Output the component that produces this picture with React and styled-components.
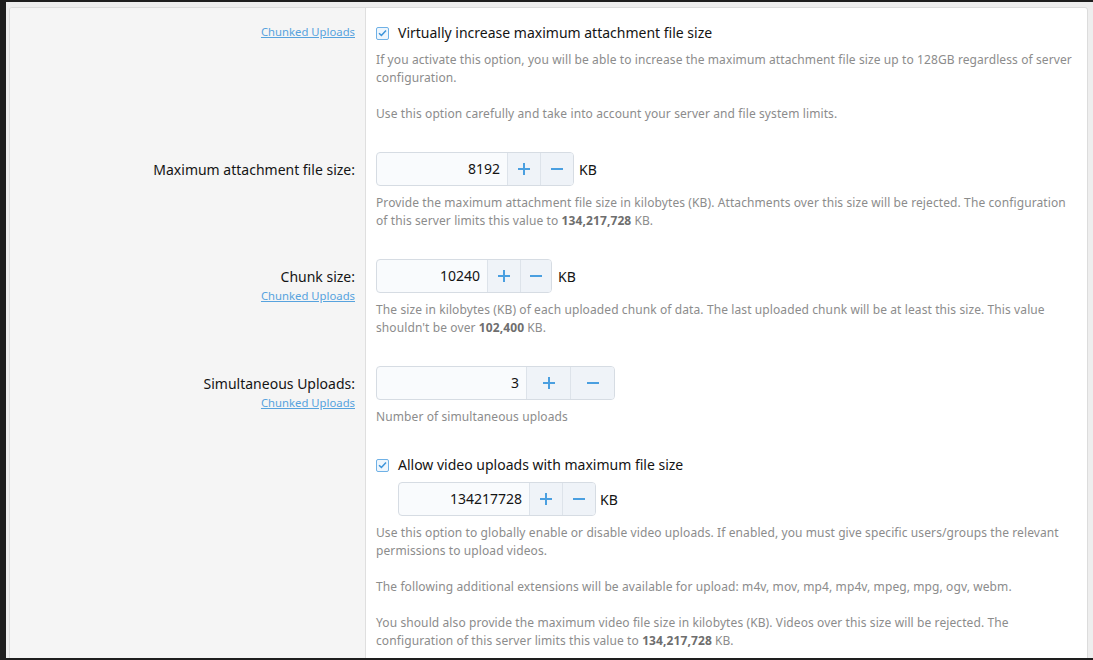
import React from "react";
import styled, { createGlobalStyle } from "styled-components";

const GlobalStyle = createGlobalStyle`
  html, body {
    margin: 0;
    background: #1e1e1e;
    font-family: "Noto Sans", "Open Sans", sans-serif;
  }
`;

const Page = styled.div`
  height: 658px;
  overflow: hidden;
  padding: 2px 0 0 6px;
  box-sizing: border-box;
`;

const Frame = styled.div`
  background: #eeeeee;
  padding: 5px 5px 0 3px;
  min-height: 100%;
  box-sizing: border-box;
`;

const Panel = styled.div`
  background: #fff;
  border: 1px solid #dcdcdc;
  border-radius: 3px 3px 0 0;
  overflow: hidden;
`;

const Row = styled.div`
  display: grid;
  grid-template-columns: 356px 1fr;
`;

const LabelCell = styled.div`
  background: #f5f5f5;
  border-right: 1px solid #dfdfdf;
  padding: ${p => p.$top}px 10px 15px;
  text-align: right;
`;

const Label = styled.div`
  font-size: 14px;
  line-height: 20px;
  color: #141414;
  padding-top: 1px;
`;

const Hint = styled.a`
  display: block;
  font-size: 11.3px;
  line-height: 18px;
  color: #57a3de;
  text-decoration: underline;
  cursor: pointer;
`;

const InputCell = styled.div`
  padding: 15px 10px;
`;

const CheckRow = styled.label`
  display: flex;
  align-items: center;
  gap: 9px;
  font-size: 14px;
  line-height: 20px;
  color: #141414;
`;

const Box = styled.span`
  width: 11px;
  height: 11px;
  border: 1px solid #6fb1e6;
  border-radius: 2px;
  background: #eef6fd;
  display: flex;
  align-items: center;
  justify-content: center;
`;

const Nested = styled.div`
  margin: 7px 0 0 22px;
`;

const UnitRow = styled.div`
  display: flex;
  align-items: center;
  gap: ${p => p.$gap || 5}px;
`;

const NumberBox = styled.div`
  display: flex;
  height: 34px;
  box-sizing: border-box;
  border: 1px solid #d6dce3;
  border-radius: 4px;
  background: #f9fbfd;
  overflow: hidden;
`;

const Field = styled.div`
  width: ${p => p.$w}px;
  box-sizing: border-box;
  padding-right: 7px;
  font-size: 14px;
  line-height: 32px;
  color: #141414;
  text-align: right;
`;

const StepButton = styled.div`
  width: ${p => p.$w}px;
  box-sizing: border-box;
  border-left: 1px solid #dde3ea;
  background: #eff3f8;
  display: flex;
  align-items: center;
  justify-content: center;
`;

const Unit = styled.span`
  font-size: 14px;
  color: #141414;
`;

const Explain = styled.div`
  margin-top: 7px;
  padding-top: 1px;
  margin-bottom: -1px;
  font-size: 12px;
  line-height: 18px;
  letter-spacing: 0.1px;
  color: #8c8c8c;

  p {
    margin: 0;
  }
  p + p {
    margin-top: 18px;
  }
  b {
    color: #6e6e6e;
  }
`;

const Check = () => (
  <Box>
    <svg width="9" height="8" viewBox="0 0 9 8">
      <path d="M1 4.2 L3.4 6.4 L8 1.4" fill="none" stroke="#3d94da" strokeWidth="1.5" />
    </svg>
  </Box>
);

const Plus = () => (
  <svg width="12" height="12" viewBox="0 0 12 12">
    <path d="M6 0 V12 M0 6 H12" stroke="#4a9fe0" strokeWidth="2" />
  </svg>
);

const Minus = () => (
  <svg width="12" height="12" viewBox="0 0 12 12">
    <path d="M0 6 H12" stroke="#4a9fe0" strokeWidth="2" />
  </svg>
);

const Spinner = ({ value, field, plus, minus, unit, gap }) => (
  <UnitRow $gap={gap}>
    <NumberBox>
      <Field $w={field}>{value}</Field>
      <StepButton $w={plus}><Plus /></StepButton>
      <StepButton $w={minus}><Minus /></StepButton>
    </NumberBox>
    {unit && <Unit>{unit}</Unit>}
  </UnitRow>
);

export default function App() {
  return (
    <>
      <GlobalStyle />
      <Page>
        <Frame>
          <Panel>
            <Row>
              <LabelCell $top={15}>
                <Hint>Chunked Uploads</Hint>
              </LabelCell>
              <InputCell>
                <CheckRow><Check />Virtually increase maximum attachment file size</CheckRow>
                <Explain>
                  <p>If you activate this option, you will be able to increase the maximum attachment file size up to 128GB regardless of server configuration.</p>
                  <p>Use this option carefully and take into account your server and file system limits.</p>
                </Explain>
              </InputCell>
            </Row>

            <Row>
              <LabelCell $top={22}>
                <Label>Maximum attachment file size:</Label>
              </LabelCell>
              <InputCell>
                <Spinner value="8192" field={130} plus={33} minus={33} unit="KB" />
                <Explain>
                  <p>Provide the maximum attachment file size in kilobytes (KB). Attachments over this size will be rejected. The configuration of this server limits this value to <b>134,217,728</b> KB.</p>
                </Explain>
              </InputCell>
            </Row>

            <Row>
              <LabelCell $top={22}>
                <Label>Chunk size:</Label>
                <Hint>Chunked Uploads</Hint>
              </LabelCell>
              <InputCell>
                <Spinner value="10240" field={110} plus={33} minus={31} unit="KB" gap={6} />
                <Explain>
                  <p>The size in kilobytes (KB) of each uploaded chunk of data. The last uploaded chunk will be at least this size. This value shouldn't be over <b>102,400</b> KB.</p>
                </Explain>
              </InputCell>
            </Row>

            <Row>
              <LabelCell $top={22}>
                <Label>Simultaneous Uploads:</Label>
                <Hint>Chunked Uploads</Hint>
              </LabelCell>
              <InputCell>
                <Spinner value="3" field={149} plus={44} minus={44} />
                <Explain>
                  <p>Number of simultaneous uploads</p>
                </Explain>
              </InputCell>
            </Row>

            <Row>
              <LabelCell $top={15} />
              <InputCell>
                <CheckRow><Check />Allow video uploads with maximum file size</CheckRow>
                <Nested>
                  <Spinner value="134217728" field={130} plus={33} minus={33} unit="KB" gap={4} />
                </Nested>
                <Explain>
                  <p>Use this option to globally enable or disable video uploads. If enabled, you must give specific users/groups the relevant permissions to upload videos.</p>
                  <p>The following additional extensions will be available for upload: m4v, mov, mp4, mp4v, mpeg, mpg, ogv, webm.</p>
                  <p>You should also provide the maximum video file size in kilobytes (KB). Videos over this size will be rejected. The configuration of this server limits this value to <b>134,217,728</b> KB.</p>
                </Explain>
              </InputCell>
            </Row>
          </Panel>
        </Frame>
      </Page>
    </>
  );
}
